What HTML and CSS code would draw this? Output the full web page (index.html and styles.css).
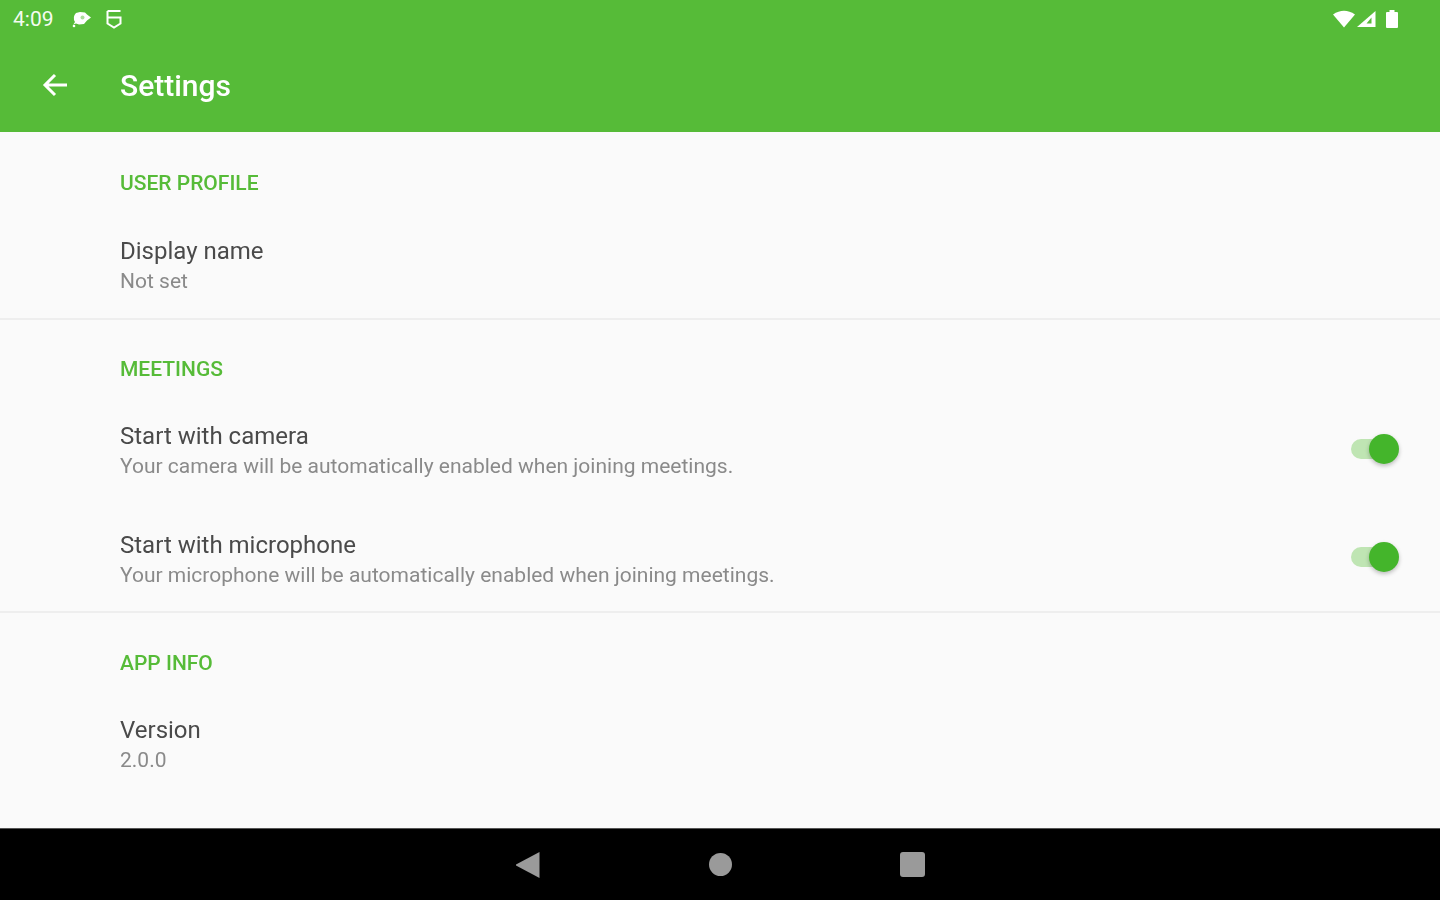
FILE: index.html
```html
<!DOCTYPE html>
<html lang="en">
<head>
  <meta charset="UTF-8">
  <meta name="viewport" content="width=device-width, initial-scale=1.0">
  <title>Settings</title>
  <link rel="stylesheet" href="styles.css">
</head>
<body>
  <div class="screen">
    <header class="app-bar">
      <div class="status-bar">
        <div class="status-left">
          <span class="clock">4:09</span>
          <svg class="status-icon" width="22" height="22" viewBox="0 0 22 22">
            <path d="M2 17l2-3a7.500 7.500 0 0 1 1-9l4-1 5 .5 2 2 4 3-4 3-3 3.500-5 .5-3-1-3 1z" fill="#fff"/>
            <circle cx="11.500" cy="9.500" r="2" fill="#a9dd9a"/>
            <circle cx="3" cy="18" r="1.300" fill="#fff"/>
          </svg>
          <svg class="status-icon icon-shield" width="18" height="20" viewBox="0 0 18 20">
            <path d="M2.500 2h13M2.500 2v12.500l6.500 4 6.500-4V8.500h-13" fill="none" stroke="#fff" stroke-width="2"/>
          </svg>
        </div>
        <div class="status-right">
          <svg width="24" height="20" viewBox="0 0 24 20"><path d="M1 5.500Q12-2 23 5.500L12 18.500z" fill="#fff"/></svg>
          <svg width="20" height="20" viewBox="0 0 20 20"><path d="M18.500 2v16H0z" fill="#fff"/><path d="M14.500 8.500v6h-5z" fill="#56bb38"/></svg>
          <svg class="battery" width="14" height="20" viewBox="0 0 14 20"><path d="M4.500 1h5v2H12a1 1 0 0 1 1 1v14a1 1 0 0 1-1 1H2a1 1 0 0 1-1-1V4a1 1 0 0 1 1-1h2.500z" fill="#fff"/></svg>
        </div>
      </div>
      <div class="toolbar">
        <svg class="back" width="28" height="28" viewBox="0 0 28 28">
          <path d="M26 14H4M14 4L4 14l10 10" fill="none" stroke="#fff" stroke-width="3"/>
        </svg>
        <h1>Settings</h1>
      </div>
    </header>

    <main class="settings">
      <section class="group group-profile">
        <h2>USER PROFILE</h2>
        <div class="row">
          <div class="row-text">
            <div class="row-title">Display name</div>
            <div class="row-sub">Not set</div>
          </div>
        </div>
      </section>

      <section class="group group-meetings">
        <h2>MEETINGS</h2>
        <div class="row">
          <div class="row-text">
            <div class="row-title">Start with camera</div>
            <div class="row-sub">Your camera will be automatically enabled when joining meetings.</div>
          </div>
          <div class="switch"><span class="track"></span><span class="thumb"></span></div>
        </div>
        <div class="row">
          <div class="row-text">
            <div class="row-title">Start with microphone</div>
            <div class="row-sub">Your microphone will be automatically enabled when joining meetings.</div>
          </div>
          <div class="switch"><span class="track"></span><span class="thumb"></span></div>
        </div>
      </section>

      <section class="group group-info">
        <h2>APP INFO</h2>
        <div class="row">
          <div class="row-text">
            <div class="row-title">Version</div>
            <div class="row-sub">2.0.0</div>
          </div>
        </div>
      </section>
    </main>

    <nav class="nav-bar">
      <svg width="24" height="26" viewBox="0 0 24 26"><path d="M23.500 0v26L-1 13z" fill="#9a9a9a"/></svg>
      <span class="nav-home"></span>
      <span class="nav-recent"></span>
    </nav>
  </div>
</body>
</html>
```

FILE: styles.css
```css
* {
  box-sizing: border-box;
}

body {
  margin: 0;
  font-family: Roboto, "Liberation Sans", sans-serif;
  background-color: #fafafa;
}

.screen {
  width: 1440px;
  height: 900px;
  display: flex;
  flex-direction: column;
  overflow: hidden;
  filter: blur(0.6px);
}

.app-bar {
  height: 132px;
  flex-shrink: 0;
  background-color: #56bb38;
  color: #fff;
}

.status-bar {
  height: 38px;
  display: flex;
  justify-content: space-between;
  align-items: center;
  padding: 0 41px 0 13px;
}

.status-left,
.status-right {
  display: flex;
  align-items: center;
}

.clock {
  font-size: 21px;
  width: 58px;
  color: #f4fbf1;
}

.status-icon {
  margin-right: 12px;
}

.status-right {
  gap: 1px;
}

.battery {
  margin-left: 7px;
}

.toolbar {
  height: 94px;
  display: flex;
  align-items: center;
  padding: 0 0 0 41px;
}

.back {
  margin-right: 51px;
  margin-top: -1px;
}

h1 {
  margin: 0;
  font-size: 30px;
  font-weight: 500;
}

.settings {
  flex: 1;
  padding-top: 1px;
}

.group {
  padding-top: 37px;
  border-bottom: 2px solid #eeeeee;
}

.group-profile {
  height: 187px;
}

.group-meetings {
  height: 293px;
  padding-top: 36px;
}

.group-info {
  border-bottom: none;
}

h2 {
  margin: 0 0 15px 120px;
  height: 26px;
  line-height: 26px;
  font-size: 21px;
  font-weight: 500;
  color: #56bb38;
}

.group-profile h2 {
  margin-bottom: 16px;
}

.row {
  height: 108.500px;
  display: flex;
  align-items: center;
  justify-content: space-between;
  padding: 0 41px 0 120px;
}

.row-title {
  font-size: 24px;
  line-height: 30px;
  color: #4a4a4a;
}

.row-sub {
  font-size: 21px;
  line-height: 30px;
  color: #8a8a8a;
}

.switch {
  position: relative;
  width: 48px;
  height: 30px;
  margin-bottom: 5px;
}

.track {
  position: absolute;
  left: 0;
  right: 4px;
  top: 5px;
  height: 20px;
  border-radius: 10px;
  background-color: #bfe5b3;
}

.thumb {
  position: absolute;
  right: 0;
  top: 0;
  width: 30px;
  height: 30px;
  border-radius: 50%;
  background-color: #44b52b;
  box-shadow: 0 2px 4px rgba(0, 0, 0, 0.25);
}

.nav-bar {
  height: 72px;
  flex-shrink: 0;
  background-color: #000;
  border-top: 1px solid #555;
  display: flex;
  align-items: center;
  justify-content: center;
  gap: 168px;
}

.nav-home {
  width: 23px;
  height: 23px;
  margin-left: 1px;
  border-radius: 50%;
  background-color: #9a9a9a;
}

.nav-recent {
  width: 25px;
  height: 25px;
  border-radius: 3px;
  background-color: #9a9a9a;
}
```
